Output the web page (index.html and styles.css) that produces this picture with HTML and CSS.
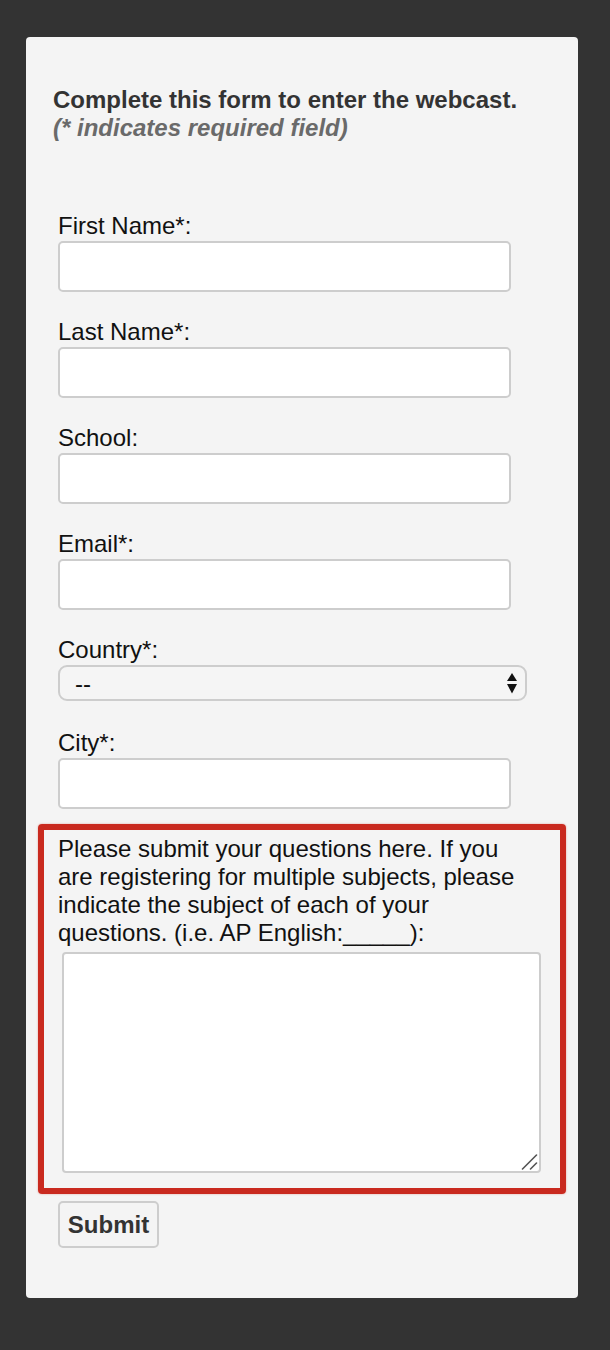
FILE: index.html
```html
<!DOCTYPE html>
<html lang="en">
<head>
<meta charset="utf-8">
<title>Webcast registration</title>
<link rel="stylesheet" href="styles.css">
</head>
<body>
<div class="card">
  <div class="intro">
    <div class="title">Complete this form to enter the webcast.</div>
    <div class="note">(* indicates required field)</div>
  </div>
  <form class="form">
    <div class="field">
      <label class="label">First Name*:</label>
      <input class="input" type="text">
    </div>
    <div class="field">
      <label class="label">Last Name*:</label>
      <input class="input" type="text">
    </div>
    <div class="field">
      <label class="label">School:</label>
      <input class="input" type="text">
    </div>
    <div class="field">
      <label class="label">Email*:</label>
      <input class="input" type="text">
    </div>
    <div class="field field-select">
      <label class="label">Country*:</label>
      <div class="select-wrap">
        <select class="select"><option>--</option></select>
        <svg class="select-arrows" width="10" height="21" viewBox="0 0 10 21"><path d="M5 0 L10 8 L0 8 Z M5 20.5 L10 11 L0 11 Z" fill="#111"/></svg>
      </div>
    </div>
    <div class="field">
      <label class="label">City*:</label>
      <input class="input" type="text">
    </div>
    <div class="field question">
      <label class="label question-label">Please submit your questions here. If you are registering for multiple subjects, please indicate the subject of each of your questions. (i.e. AP English:_____):</label>
      <div class="textarea-wrap">
        <textarea class="textarea"></textarea>
        <svg class="grip" width="17" height="17" viewBox="0 0 17 17"><path d="M1.5 16 L15.5 2 M9.5 16 L15.5 10" stroke="#555" stroke-width="1.6" fill="none" stroke-linecap="round"/></svg>
      </div>
    </div>
    <button class="submit" type="button">Submit</button>
  </form>
</div>
</body>
</html>
```

FILE: styles.css
```css
html {
  background: #333333;
}
body {
  margin: 0;
  background: #333333;
  font-family: "Liberation Sans", Arial, Helvetica, sans-serif;
  padding: 37px 0 52px 26px;
}
.card {
  width: 552px;
  box-sizing: border-box;
  background: #f4f4f4;
  border-radius: 4px;
  padding: 49px 27px 50px 27px;
}
.intro {
  font-size: 24px;
  line-height: 28px;
  font-weight: bold;
  margin-bottom: 70px;
}
.title {
  color: #333333;
}
.note {
  color: #6a6a6a;
  font-style: italic;
}
.form {
  padding-left: 5px;
}
.field {
  margin-bottom: 26px;
}
.field-select {
  margin-bottom: 28px;
}
.label {
  display: block;
  font-size: 24px;
  line-height: 28px;
  color: #111111;
  margin-bottom: 1px;
}
.input {
  display: block;
  box-sizing: border-box;
  width: 453px;
  height: 51px;
  margin: 0;
  background: #ffffff;
  border: 2px solid #cdcdcd;
  border-radius: 5px;
  font-size: 20px;
  padding: 0 10px;
}
.select-wrap {
  position: relative;
  width: 469px;
}
.select {
  display: block;
  appearance: none;
  -webkit-appearance: none;
  box-sizing: border-box;
  width: 469px;
  height: 36px;
  margin: 0;
  background: #f5f5f5;
  border: 2px solid #cdcdcd;
  border-radius: 9px;
  font-family: "Liberation Sans", Arial, sans-serif;
  font-size: 24px;
  color: #111111;
  padding: 0 0 0 15px;
}
.select-arrows {
  position: absolute;
  left: 449px;
  top: 8px;
  pointer-events: none;
}
.question {
  position: relative;
  margin-bottom: 28px;
}
.question::before {
  content: "";
  position: absolute;
  top: -11px;
  left: -20px;
  width: 528px;
  bottom: -21px;
  box-sizing: border-box;
  border: 6px solid #c92a1f;
  border-radius: 4px;
  box-shadow: 0 0 2px rgba(201, 42, 31, 0.45);
  pointer-events: none;
}
.question-label {
  max-width: 466px;
  margin-bottom: 0;
}
.textarea-wrap {
  position: relative;
  width: 479px;
  margin: 5px 0 0 4px;
}
.textarea {
  display: block;
  box-sizing: border-box;
  width: 479px;
  height: 221px;
  margin: 0;
  background: #ffffff;
  border: 2px solid #cdcdcd;
  border-radius: 4px;
  resize: none;
  font-size: 20px;
}
.grip {
  position: absolute;
  right: 3px;
  bottom: 3px;
  pointer-events: none;
}
.submit {
  display: block;
  box-sizing: border-box;
  width: 101px;
  height: 47px;
  margin: 0;
  padding: 0;
  background: #f4f4f4;
  border: 2px solid #cdcdcd;
  border-radius: 5px;
  font-family: "Liberation Sans", Arial, sans-serif;
  font-size: 24px;
  font-weight: bold;
  color: #333333;
}
```
